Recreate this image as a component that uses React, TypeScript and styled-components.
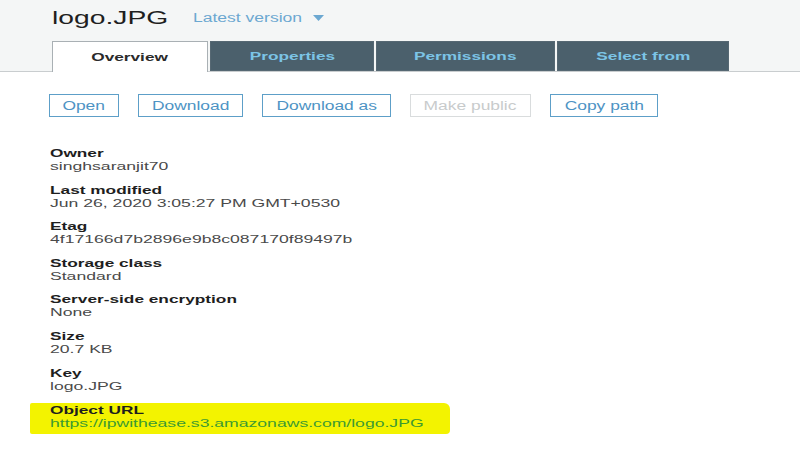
import React from "react";
import styled, { createGlobalStyle } from "styled-components";

const Global = createGlobalStyle`
  html, body { margin: 0; padding: 0; background: #ffffff; }
  body { font-family: "Liberation Sans", Arial, sans-serif; width: 800px; height: 449px; overflow: hidden; }
`;

const Stretch = styled.span<{ $sx: number; $origin?: string }>`
  display: inline-block;
  white-space: nowrap;
  transform: scaleX(${(p) => p.$sx});
  transform-origin: ${(p) => p.$origin || "left"} center;
`;

const Page = styled.div`
  display: flex;
  flex-direction: column;
`;

const Header = styled.header`
  background: #f4f6f6;
  border-bottom: 1px solid #c9cdcf;
  height: 71px;
  box-sizing: content-box;
  display: flex;
  flex-direction: column;
  padding-left: 52px;
`;

const TitleRow = styled.div`
  display: flex;
  align-items: center;
  height: 24px;
  margin-top: 6px;
`;

const Title = styled.h1`
  margin: 0;
  font-size: 18px;
  font-weight: normal;
  color: #1f1f1f;
  width: 141px;
  line-height: 24px;
`;

const Version = styled.div`
  display: flex;
  align-items: center;
  color: #6ca8d1;
  font-size: 12px;
`;

const VersionText = styled.span`
  width: 120px;
`;

const Caret = styled.svg`
  width: 11px;
  height: 6px;
`;

const Tabs = styled.nav`
  display: flex;
  gap: 2px;
  margin-top: 11px;
  height: 30px;
`;

const Tab = styled.div<{ $active?: boolean; $w: number }>`
  width: ${(p) => p.$w}px;
  height: ${(p) => (p.$active ? 31 : 30)}px;
  box-sizing: border-box;
  display: flex;
  align-items: center;
  justify-content: center;
  font-size: 11.5px;
  font-weight: bold;
  background: ${(p) => (p.$active ? "#ffffff" : "#4b606c")};
  color: ${(p) => (p.$active ? "#2a2a2a" : "#7cc4e6")};
  border: 1px solid ${(p) => (p.$active ? "#a9b0b4" : "#566873")};
  border-bottom: ${(p) => (p.$active ? "none" : "1px solid #566873")};
  padding-bottom: ${(p) => (p.$active ? 1 : 0)}px;
`;

const Buttons = styled.div`
  display: flex;
  gap: 19px;
  margin: 22px 0 0 49px;
`;

const Button = styled.button<{ $w: number; $disabled?: boolean }>`
  width: ${(p) => p.$w}px;
  height: 23px;
  box-sizing: border-box;
  background: #ffffff;
  border: 1px solid ${(p) => (p.$disabled ? "#d9dcdd" : "#5d9fc8")};
  color: ${(p) => (p.$disabled ? "#c8cbcc" : "#4d93c4")};
  font-family: "Liberation Sans", Arial, sans-serif;
  font-size: 12px;
  padding: 0;
  display: flex;
  align-items: center;
  justify-content: center;
`;

const Details = styled.dl`
  display: flex;
  flex-direction: column;
  gap: 10.6px;
  margin: 30px 0 0 50px;
`;

const Field = styled.div`
  display: flex;
  flex-direction: column;
`;

const Label = styled.dt`
  font-size: 11.5px;
  line-height: 12px;
  font-weight: bold;
  color: #1e1e1e;
`;

const Value = styled.dd<{ $link?: boolean }>`
  margin: 0;
  font-size: 11.5px;
  line-height: 13px;
  padding-top: 1px;
  color: ${(p) => (p.$link ? "#3c9a32" : "#4a4a4a")};
`;

const Highlight = styled.div`
  display: flex;
  flex-direction: column;
  background: #f3f300;
  width: 420px;
  box-sizing: border-box;
  margin-left: -20px;
  padding: 1px 0 4px 20px;
  border-radius: 2px 6px 4px 2px;
`;

const tabs = [
  { label: "Overview", w: 156, active: true },
  { label: "Properties", w: 164 },
  { label: "Permissions", w: 179 },
  { label: "Select from", w: 172 },
];

const buttons = [
  { label: "Open", w: 70 },
  { label: "Download", w: 105 },
  { label: "Download as", w: 129 },
  { label: "Make public", w: 121, disabled: true },
  { label: "Copy path", w: 108 },
];

const fields = [
  { k: "Owner", v: "singhsaranjit70" },
  { k: "Last modified", v: "Jun 26, 2020 3:05:27 PM GMT+0530" },
  { k: "Etag", v: "4f17166d7b2896e9b8c087170f89497b" },
  { k: "Storage class", v: "Standard" },
  { k: "Server-side encryption", v: "None" },
  { k: "Size", v: "20.7 KB" },
  { k: "Key", v: "logo.JPG" },
];

export default function App() {
  return (
    <Page>
      <Global />
      <Header>
        <TitleRow>
          <Title>
            <Stretch $sx={1.57}>logo.JPG</Stretch>
          </Title>
          <Version>
            <VersionText>
              <Stretch $sx={1.46}>Latest version</Stretch>
            </VersionText>
            <Caret viewBox="0 0 11 6">
              <path d="M0 0 L11 0 L5.5 6 Z" fill="#6ca8d1" />
            </Caret>
          </Version>
        </TitleRow>
        <Tabs>
          {tabs.map((t) => (
            <Tab key={t.label} $w={t.w} $active={t.active}>
              <Stretch $sx={1.5} $origin="center">
                {t.label}
              </Stretch>
            </Tab>
          ))}
        </Tabs>
      </Header>
      <Buttons>
        {buttons.map((b) => (
          <Button key={b.label} $w={b.w} $disabled={b.disabled}>
            <Stretch $sx={1.45} $origin="center">
              {b.label}
            </Stretch>
          </Button>
        ))}
      </Buttons>
      <Details>
        {fields.map((f) => (
          <Field key={f.k}>
            <Label>
              <Stretch $sx={1.5}>{f.k}</Stretch>
            </Label>
            <Value>
              <Stretch $sx={1.53}>{f.v}</Stretch>
            </Value>
          </Field>
        ))}
        <Highlight>
          <Label>
            <Stretch $sx={1.5}>Object URL</Stretch>
          </Label>
          <Value $link>
            <Stretch $sx={1.53}>https://ipwithease.s3.amazonaws.com/logo.JPG</Stretch>
          </Value>
        </Highlight>
      </Details>
    </Page>
  );
}
